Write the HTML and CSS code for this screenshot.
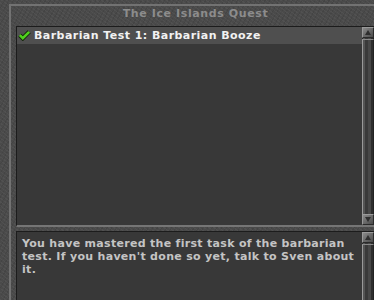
FILE: index.html
```html
<!DOCTYPE html>
<html lang="en">
<head>
    <meta charset="UTF-8">
    <title>The Ice Islands Quest</title>
    <link rel="stylesheet" href="styles.css">
</head>
<body>
    <div class="window">
        <div class="title">The Ice Islands Quest</div>

        <!-- Mission list -->
        <div class="panel list-panel">
            <div class="panel-body">
                <div class="row selected">
                    <svg class="check" width="13" height="11" viewBox="0 0 13 11">
                        <path d="M1.8 5.2 L4.8 8.2 L11.2 1.8" fill="none" stroke="#122608" stroke-width="4.4"/>
                        <path d="M1.8 5.2 L4.8 8.2 L11.2 1.8" fill="none" stroke="#4fd01e" stroke-width="2.6"/>
                    </svg>
                    <span>Barbarian Test 1: Barbarian Booze</span>
                </div>
            </div>
            <div class="scrollbar">
                <div class="arrow up"></div>
                <div class="track"></div>
                <div class="arrow down"></div>
            </div>
        </div>

        <!-- Description -->
        <div class="panel text-panel">
            <div class="panel-body description">
                You have mastered the first task of the barbarian test. If you haven't done so yet, talk to Sven about it.
            </div>
            <div class="scrollbar">
                <div class="arrow up"></div>
                <div class="track"></div>
            </div>
        </div>
    </div>
</body>
</html>
```

FILE: styles.css
```css
* {
    margin: 0;
    padding: 0;
    box-sizing: border-box;
}

body {
    width: 374px;
    height: 300px;
    overflow: hidden;
    font-family: "DejaVu Sans", Verdana, sans-serif;
    font-weight: bold;
    font-size: 11px;
    letter-spacing: 0.3px;
    background-color: #4a4a4a;
    background-image:
        repeating-linear-gradient(37deg, rgba(255,255,255,0.04) 0 1px, transparent 1px 3px),
        repeating-linear-gradient(-61deg, rgba(0,0,0,0.08) 0 1px, transparent 1px 4px);
}

/* Window frame */
.window {
    margin: 4px 0 0 9px;
    width: 370px;
    height: 300px;
    border-top: 2px solid #727272;
    border-left: 2px solid #727272;
    padding-left: 5px;
}

.title {
    height: 20px;
    line-height: 16px;
    text-align: center;
    color: #8c8c8c;
    letter-spacing: 0.6px;
    padding-right: 4px;
}

/* Sunken panels */
.panel {
    display: flex;
    width: 358px;
    border-top: 1px solid #1c1c1c;
    border-left: 1px solid #1c1c1c;
    border-bottom: 2px solid #757575;
}

.list-panel {
    height: 201px;
}

.text-panel {
    margin-top: 4px;
    height: 80px;
}

.panel-body {
    flex: 1;
    background-color: #383838;
}

.row {
    display: flex;
    align-items: center;
    height: 17px;
    padding-left: 1px;
    color: #f2f2f2;
    letter-spacing: 0.45px;
}

.row.selected {
    background-color: #4f4f4f;
}

.check {
    margin-right: 3px;
}

.description {
    padding: 5px 5px 0 5px;
    color: #c4c4c4;
    line-height: 13px;
}

/* Scrollbar */
.scrollbar {
    width: 12px;
    display: flex;
    flex-direction: column;
    background: linear-gradient(to right, #2a2a2a 0 1px, #555 1px 3px, #3a3a3a 3px 6px, #484848 6px 9px, #2e2e2e 9px 11px, #1e1e1e 11px);
}

.arrow {
    position: relative;
    height: 11px;
    background: linear-gradient(to bottom right, #8a8a8a, #4a4a4a);
    border: 1px solid #2a2a2a;
    border-top-color: #9a9a9a;
    border-left-color: #9a9a9a;
}

.arrow::after {
    content: "";
    position: absolute;
    left: 2px;
    top: 2px;
    border-left: 3px solid transparent;
    border-right: 3px solid transparent;
}

.arrow.up::after {
    border-bottom: 5px solid #2e2e2e;
}

.arrow.down::after {
    border-top: 5px solid #2e2e2e;
}

.track {
    flex: 1;
    border-left: 1px solid #9a9a9a;
    border-top: 1px solid #8a8a8a;
    border-right: 1px solid #222;
    margin-top: 1px;
}
```
